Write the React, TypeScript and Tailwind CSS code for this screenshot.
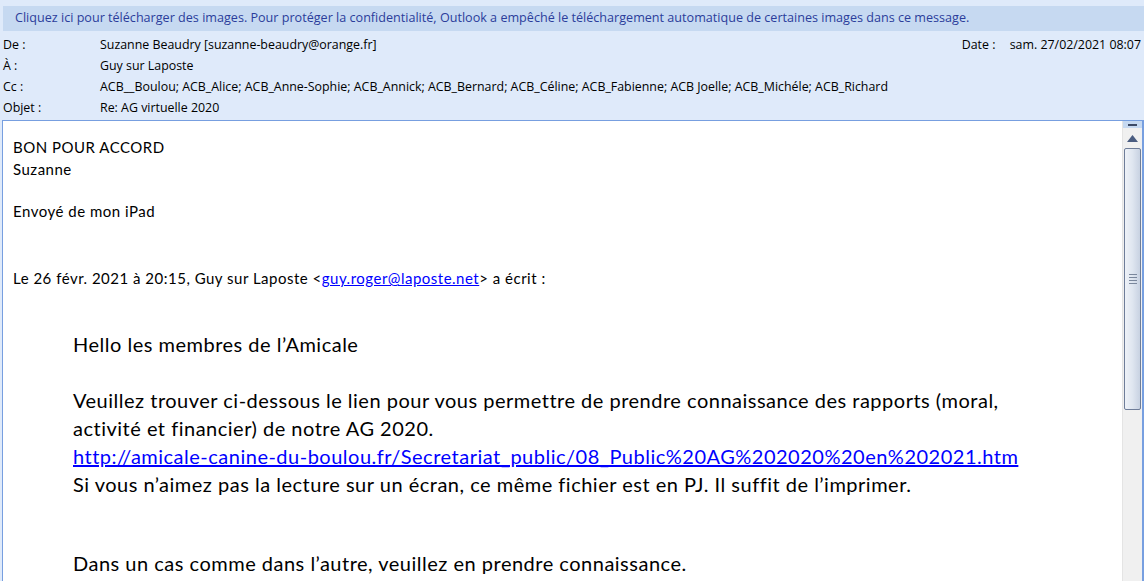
import React from "react";

const ui = { fontFamily: '"Open Sans", "DejaVu Sans", sans-serif' };
const body = { fontFamily: 'Lato, "Liberation Sans", sans-serif' };

function HeaderRow({ label, children }: { label: string; children: React.ReactNode }) {
  return (
    <div className="grid h-[21px] grid-cols-[100px_1fr] items-center">
      <span className="pl-[3px]">{label}</span>
      <span className="whitespace-nowrap">{children}</span>
    </div>
  );
}

function Scrollbar() {
  return (
    <div className="flex w-[20px] shrink-0 flex-col bg-[#f0f0f0] border-l border-[#e4e4e4]">
      <div className="flex h-[7px] items-center justify-center bg-[#c6d9f1]">
        <div className="h-[2px] w-[9px] bg-[#3c4a66]" />
      </div>
      <div className="flex h-[20px] items-center justify-center">
        <svg width="11" height="7" viewBox="0 0 11 7">
          <path d="M5.5 0 L11 7 L0 7 Z" fill="#4a5c80" />
        </svg>
      </div>
      <div className="mx-[1px] flex h-[262px] items-center justify-center rounded-[2px] border border-[#6e7d99] bg-gradient-to-r from-[#eef2f8] via-[#dfe6f0] to-[#c8d2e2]">
        <div className="flex flex-col gap-[2px]">
          <div className="h-px w-[8px] bg-[#7a879c]" />
          <div className="h-px w-[8px] bg-[#7a879c]" />
          <div className="h-px w-[8px] bg-[#7a879c]" />
          <div className="h-px w-[8px] bg-[#7a879c]" />
        </div>
      </div>
      <div className="flex-1" />
    </div>
  );
}

export default function App() {
  return (
    <div className="flex h-[581px] w-[1144px] flex-col overflow-hidden bg-[#dfeafa] text-black">
      <div className="h-[6px]" />
      <div
        className="ml-[3px] flex h-[25px] items-center bg-[#c6d9f1] pl-[12px] text-[12.6px] text-[#2b3d9b]"
        style={ui}
      >
        Cliquez ici pour télécharger des images. Pour protéger la confidentialité, Outlook a empêché le
        téléchargement automatique de certaines images dans ce message.
      </div>
      <div className="flex flex-col pt-[3px] text-[12.4px]" style={ui}>
        <div className="flex h-[22px] items-center justify-between">
          <HeaderRow label="De :">Suzanne Beaudry [suzanne-beaudry@orange.fr]</HeaderRow>
          <div className="flex pr-[3px]">
            <span className="w-[48px]">Date :</span>
            <span>sam. 27/02/2021 08:07</span>
          </div>
        </div>
        <HeaderRow label="À :">Guy sur Laposte</HeaderRow>
        <HeaderRow label="Cc :">
          ACB__Boulou; ACB_Alice; ACB_Anne-Sophie; ACB_Annick; ACB_Bernard; ACB_Céline; ACB_Fabienne; ACB
          Joelle; ACB_Michéle; ACB_Richard
        </HeaderRow>
        <HeaderRow label="Objet :">Re: AG virtuelle 2020</HeaderRow>
      </div>
      <div className="mt-[1px] ml-[2px] flex min-h-0 flex-1 border border-b-0 border-[#779fe0] bg-white">
        <div className="flex-1 overflow-hidden pl-[10px] pt-[15px]" style={body}>
          <div className="text-[15px] leading-[22px] tracking-[0.5px]">
            <p>BON POUR ACCORD</p>
            <p>Suzanne</p>
            <div className="h-[20px]" />
            <p>Envoyé de mon iPad</p>
            <div className="h-[22px]" />
            <div className="h-[23px]" />
            <p>
              Le 26 févr. 2021 à 20:15, Guy sur Laposte &lt;
              <a className="text-[#0000ff] underline">guy.roger@laposte.net</a>&gt; a écrit :
            </p>
          </div>
          <div className="mt-[41px] pl-[60px] text-[20px] leading-[28px] tracking-[0.5px]">
            <p>Hello les membres de l’Amicale</p>
            <div className="h-[28px]" />
            <p>
              Veuillez trouver ci-dessous le lien pour vous permettre de prendre connaissance des rapports (moral,
            </p>
            <p>activité et financier) de notre AG 2020.</p>
            <p>
              <a className="text-[#0000ff] underline">
                http://amicale-canine-du-boulou.fr/Secretariat_public/08_Public%20AG%202020%20en%202021.htm
              </a>
            </p>
            <p>Si vous n’aimez pas la lecture sur un écran, ce même fichier est en PJ. Il suffit de l’imprimer.</p>
            <div className="h-[25px]" />
            <div className="h-[26px]" />
            <p>Dans un cas comme dans l’autre, veuillez en prendre connaissance.</p>
          </div>
        </div>
        <Scrollbar />
        <div className="w-[1px] bg-[#779fe0]" />
      </div>
    </div>
  );
}
